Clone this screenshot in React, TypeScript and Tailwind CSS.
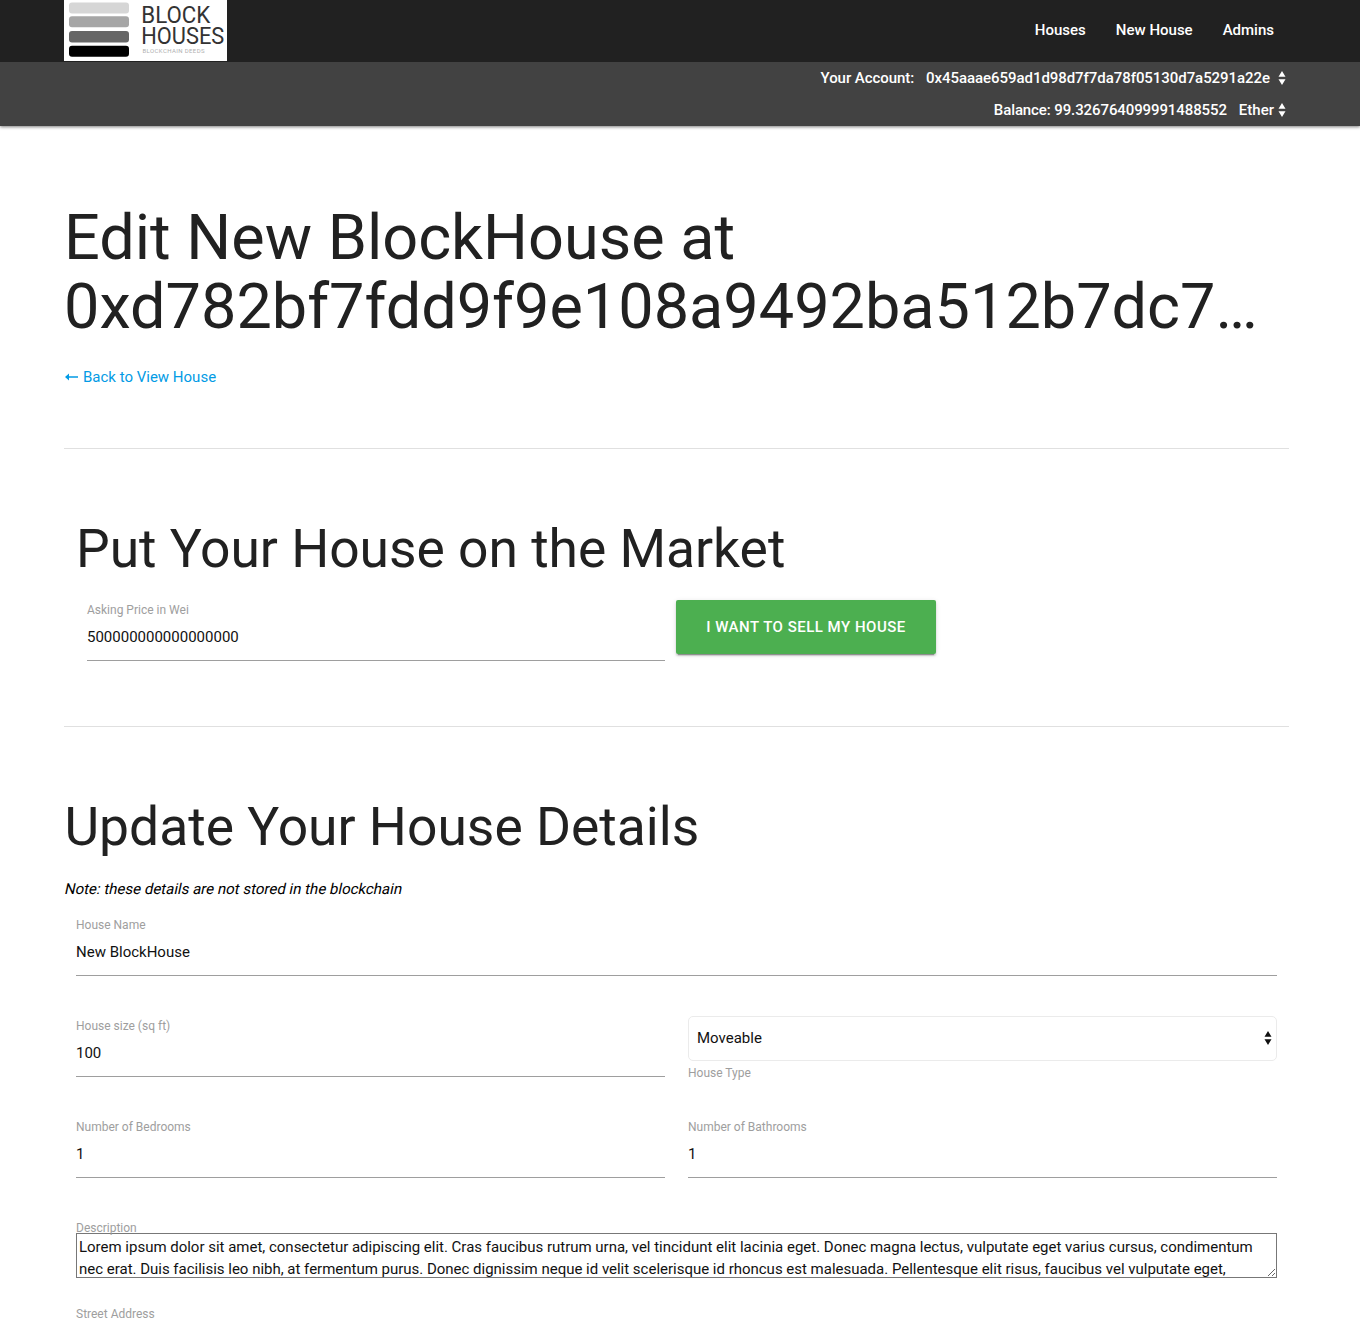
import type { ReactNode } from 'react';

function Arrows({ className }: { className?: string }) {
  return (
    <svg className={className} width="8" height="14" viewBox="0 0 8 14" fill="currentColor">
      <path d="M4 0L7.5 5.8H.5zM.5 8.2H7.5L4 14z" />
    </svg>
  );
}

function Logo() {
  return (
    <svg className="block bg-white" width="163" height="61" viewBox="0 0 163 61" fontFamily="Roboto, sans-serif" fontWeight="400">
      <rect x="5" y="2.5" width="60" height="11" rx="3" fill="#d6d6d6" />
      <rect x="5" y="16.3" width="60" height="11" rx="3" fill="#a6a6a6" />
      <rect x="5" y="31" width="60" height="11.5" rx="3" fill="#666666" />
      <rect x="5" y="45.7" width="60" height="11" rx="3" fill="#000000" />
      <text x="77.3" y="23" fontSize="23" fill="#333" textLength="69" lengthAdjust="spacingAndGlyphs">BLOCK</text>
      <text x="77.3" y="43.5" fontSize="23" fill="#333" textLength="83" lengthAdjust="spacingAndGlyphs">HOUSES</text>
      <text x="78.5" y="53" fontSize="6" fill="#b0b0b0" textLength="62">BLOCKCHAIN DEEDS</text>
    </svg>
  );
}

function Field({ label, value, className }: { label: string; value: string; className?: string }) {
  return (
    <div className={className}>
      <label className="block h-[17px] text-[12px] leading-[17px] text-[#9e9e9e]">{label}</label>
      <div className="mt-[-1px] h-[43px] border-b border-[#9e9e9e] text-[15px] leading-[38px]">{value}</div>
    </div>
  );
}

function SectionTitle({ children, className }: { children: ReactNode; className?: string }) {
  return <h2 className={`text-[53.4px] leading-[58.7px] whitespace-nowrap text-[#212121] ${className ?? ''}`}>{children}</h2>;
}

export default function App() {
  return (
    <div className="h-[1332px] w-[1360px] overflow-hidden bg-white font-[Roboto,sans-serif] text-[15px] text-[#111]">
      <header className="h-[126px] bg-[#424242] font-medium text-white shadow-[0_1px_3px_rgba(0,0,0,0.5)]">
        <div className="flex h-[62px] items-start justify-between bg-[#212121] pr-[86px] pl-16">
          <Logo />
          <nav className="flex gap-[30px] leading-[60px]">
            <a>Houses</a>
            <a>New House</a>
            <a>Admins</a>
          </nav>
        </div>
        <div className="flex h-8 items-center justify-end pr-[74.5px]">
          <span className="tracking-[-0.06px]">Your Account:</span>
          <span className="ml-[12px] tracking-[-0.055px]">0x45aaae659ad1d98d7f7da78f05130d7a5291a22e</span>
          <Arrows className="ml-[7.5px]" />
        </div>
        <div className="flex h-8 items-center justify-end pr-[74.5px]">
          <span className="tracking-[-0.1px]">Balance: 99.326764099991488552</span>
          <span className="ml-3">Ether</span>
          <Arrows className="ml-[3.5px]" />
        </div>
      </header>

      <main className="ml-16 w-[1225px]">
        <section className="h-[323px] border-b border-[#e0e0e0] pt-[77px]">
          <h1 className="text-[63px] leading-[69px] whitespace-nowrap text-[#212121]">
            Edit New BlockHouse at
            <br />
            0xd782bf7fdd9f9e108a9492ba512b7dc7…
          </h1>
          <a className="mt-[25px] flex items-center leading-[22px] text-[#039be5]">
            <svg className="mr-[5px] ml-[1px]" width="13" height="8" viewBox="0 0 13 8" fill="currentColor">
              <path d="M0 4L4 .6V3.3H13V4.7H4V7.4z" />
            </svg>
            Back to View House
          </a>
        </section>

        <section className="h-[278px] border-b border-[#e0e0e0] pt-[71px] pl-3">
          <SectionTitle className="tracking-[-0.03px]">Put Your House on the Market</SectionTitle>
          <div className="mt-[21px] flex pl-[11px]">
            <Field className="mt-[2px] w-[578px]" label="Asking Price in Wei" value="500000000000000000" />
            <button className="ml-[11px] h-[54px] w-[260px] rounded-[2px] bg-[#4caf50] leading-[54px] font-medium tracking-[0.5px] text-white shadow-[0_2px_2px_0_rgba(0,0,0,0.14),0_1px_5px_0_rgba(0,0,0,0.12),0_3px_1px_-2px_rgba(0,0,0,0.3)]">
              I WANT TO SELL MY HOUSE
            </button>
          </div>
        </section>

        <section className="pt-[71px]">
          <SectionTitle className="pl-[0.5px]">Update Your House Details</SectionTitle>
          <p className="mt-[21px] w-max -skew-x-12 pl-[1px] leading-[22px] text-black">
            Note: these details are not stored in the blockchain
          </p>
          <div className="mt-[17px] grid grid-cols-2 gap-x-[23px] gap-y-[42px] px-3">
            <Field className="col-span-2" label="House Name" value="New BlockHouse" />
            <Field label="House size (sq ft)" value="100" />
            <div className="-mt-[2px] h-[61px]">
              <div className="flex h-[45px] items-center justify-between rounded-[5px] border border-[#ebebeb] pr-1 pl-2">
                <span>Moveable</span>
                <Arrows />
              </div>
              <div className="mt-1 text-[12px] leading-[17px] text-[#9e9e9e]">House Type</div>
            </div>
            <Field label="Number of Bedrooms" value="1" />
            <Field label="Number of Bathrooms" value="1" />
          </div>
          <div className="mt-[42px] px-3">
            <label className="block h-[13px] text-[12px] leading-[17px] text-[#9e9e9e]">Description</label>
            <textarea
              readOnly
              className="block h-[45px] w-full resize overflow-hidden border border-[#777] px-[2px] py-[2px] text-[15px] leading-[22px] tracking-[-0.01px]"
              value={
                'Lorem ipsum dolor sit amet, consectetur adipiscing elit. Cras faucibus rutrum urna, vel tincidunt elit lacinia eget. Donec magna lectus, vulputate eget varius cursus, condimentum nec erat. Duis facilisis leo nibh, at fermentum purus. Donec dignissim neque id velit scelerisque id rhoncus est malesuada. Pellentesque elit risus, faucibus vel vulputate eget,'
              }
            />
            <label className="mt-[28px] block text-[12px] leading-[17px] text-[#9e9e9e]">Street Address</label>
          </div>
        </section>
      </main>
    </div>
  );
}
